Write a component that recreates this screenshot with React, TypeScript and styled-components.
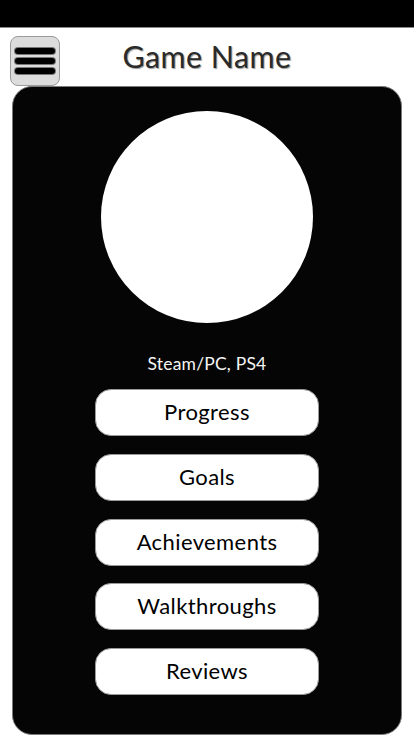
import React from "react";
import styled, { createGlobalStyle } from "styled-components";

const Global = createGlobalStyle`
  html, body { margin: 0; padding: 0; background: #ffffff; }
  body { font-family: Lato, "Noto Sans", sans-serif; }
  * { box-sizing: border-box; }
`;

const Page = styled.div`
  width: 414px;
  height: 736px;
  display: flex;
  flex-direction: column;
  background: #ffffff;
  overflow: hidden;
`;

const StatusBar = styled.div`
  height: 28px;
  flex: none;
  background: #000000;
  border-bottom: 1px solid #8a8a8a;
`;

const Header = styled.header`
  height: 58px;
  flex: none;
  display: grid;
  grid-template-columns: 1fr auto 1fr;
  align-items: center;
  padding: 7px 10px 0;
`;

const MenuButton = styled.button`
  justify-self: start;
  width: 50px;
  height: 50px;
  margin-top: 1px;
  padding: 0;
  display: flex;
  align-items: center;
  justify-content: center;
  background: #dcdcdc;
  border: 1px solid #9a9a9a;
  border-radius: 8px;
`;

const Title = styled.h1`
  margin: 0;
  font-family: Lato, "Noto Sans", sans-serif;
  font-weight: 400;
  font-size: 30.5px;
  letter-spacing: 0.4px;
  color: #2a2a2a;
  text-shadow: 1px 1px 1px #9a9a9a;
  padding-bottom: 10px;
`;

const Card = styled.main`
  flex: 1;
  margin: 0 12px 1px 12px;
  background: #050505;
  border: 1px solid #7a7a7a;
  border-radius: 20px;
  display: flex;
  flex-direction: column;
  align-items: center;
  padding-top: 24px;
`;

const Cover = styled.div`
  width: 212px;
  height: 212px;
  border-radius: 50%;
  background: #ffffff;
  flex: none;
`;

const Platforms = styled.p`
  margin: 31px 0 0;
  height: 20px;
  line-height: 20px;
  font-size: 17.5px;
  font-weight: 400;
  letter-spacing: 0.2px;
  color: #f5f5f5;
`;

const Menu = styled.nav`
  margin-top: 15px;
  display: flex;
  flex-direction: column;
  gap: 17.75px;
`;

const MenuItem = styled.button`
  width: 224px;
  height: 47px;
  border: 1px solid #9a9a9a;
  border-radius: 16px;
  background: #ffffff;
  color: #000000;
  font-family: Lato, "Noto Sans", sans-serif;
  font-weight: 400;
  font-size: 22px;
  letter-spacing: 0.4px;
  padding: 0 0 2px;
`;

const items = ["Progress", "Goals", "Achievements", "Walkthroughs", "Reviews"];

export default function App() {
  return (
    <Page>
      <Global />
      <StatusBar />
      <Header>
        <MenuButton aria-label="Menu">
          <svg width="42" height="30" viewBox="0 0 42 30">
            {[5, 15, 25].map((y) => (
              <g key={y}>
                <line x1="4" y1={y} x2="38" y2={y} stroke="#777" strokeWidth="8" strokeLinecap="round" />
                <line x1="4" y1={y} x2="38" y2={y} stroke="#000" strokeWidth="6" strokeLinecap="round" />
              </g>
            ))}
          </svg>
        </MenuButton>
        <Title>Game Name</Title>
        <span />
      </Header>
      <Card>
        <Cover />
        <Platforms>Steam/PC, PS4</Platforms>
        <Menu>
          {items.map((t) => (
            <MenuItem key={t}>{t}</MenuItem>
          ))}
        </Menu>
      </Card>
    </Page>
  );
}
